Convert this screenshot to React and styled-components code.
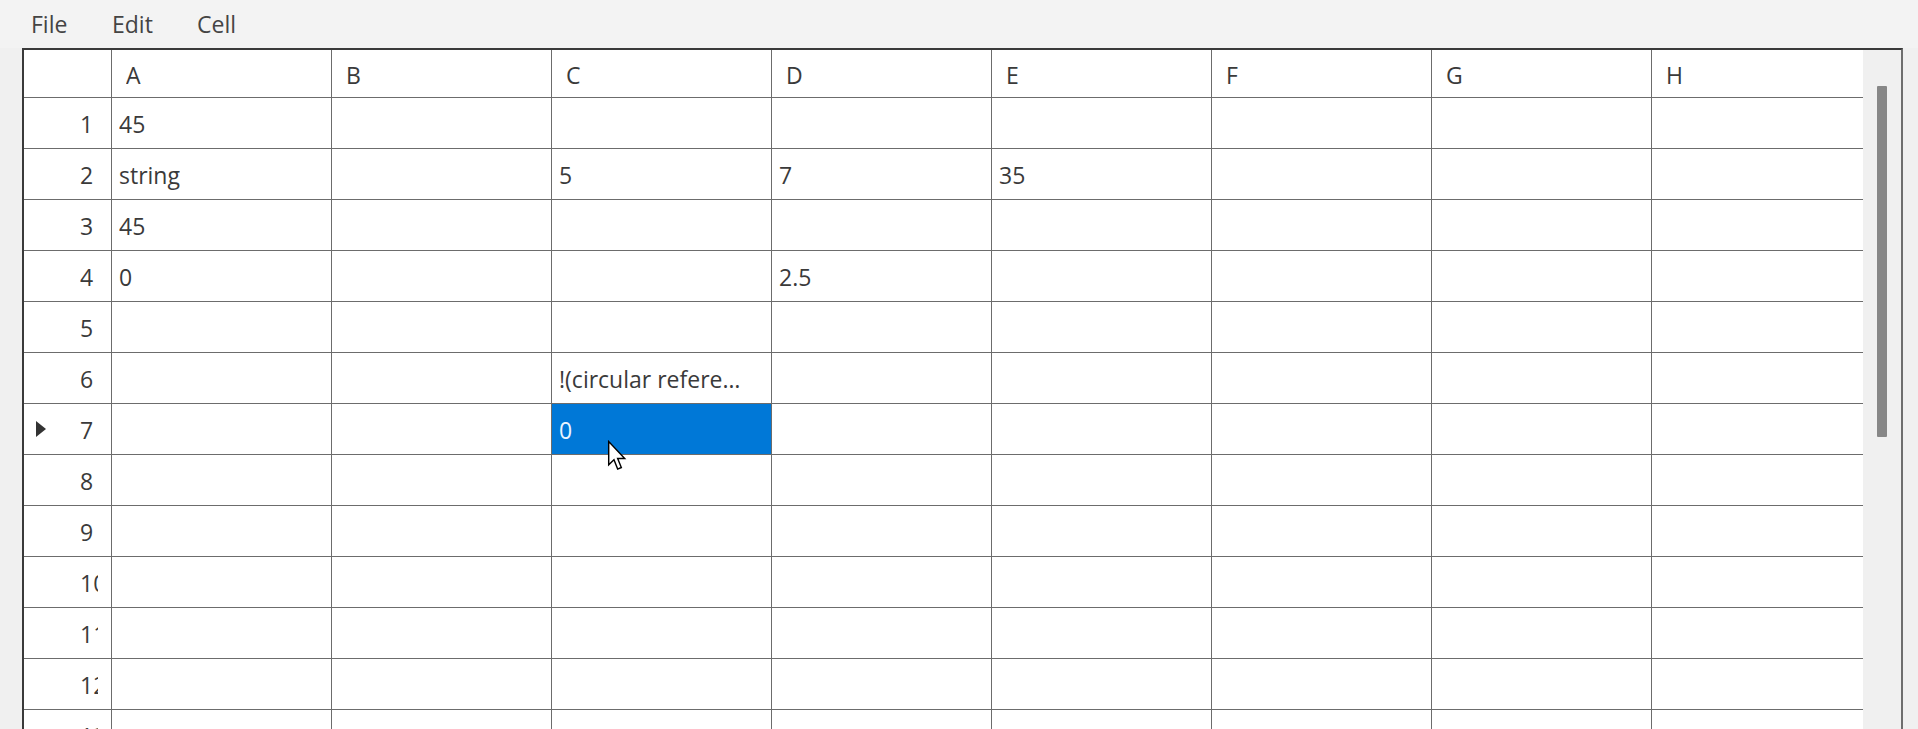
import React from "react";
import styled, { createGlobalStyle } from "styled-components";

const GlobalStyle = createGlobalStyle`
  html, body {
    margin: 0;
    padding: 0;
    overflow: hidden;
    background: #f0f0f0;
  }
  * {
    box-sizing: border-box;
  }
`;

const Window = styled.div`
  width: 1918px;
  height: 729px;
  display: flex;
  flex-direction: column;
  background: #f0f0f0;
  font-family: "Open Sans", "Noto Sans", sans-serif;
  color: #3a3a3a;
  overflow: hidden;
`;

const MenuBar = styled.div`
  height: 48px;
  flex-shrink: 0;
  display: flex;
  align-items: center;
  padding-left: 31px;
  background: #f3f3f3;
`;

const MenuItem = styled.div`
  width: ${(p) => p.$width}px;
  font-size: 23px;
  line-height: 30px;
  color: #444;
  margin-top: 0;
`;

const Frame = styled.div`
  flex: 1;
  min-height: 0;
  margin-left: 22px;
  width: 1881px;
  display: flex;
  border-top: 2px solid #3a3a3a;
  border-left: 2px solid #3a3a3a;
  border-right: 2px solid #6e6e6e;
  background: #fff;
`;

const GridArea = styled.div`
  flex: 1;
  min-width: 0;
  overflow: hidden;
`;

const Grid = styled.div`
  display: grid;
  grid-template-columns: 88px repeat(8, 220px);
  grid-auto-rows: 51px;
  grid-template-rows: 48px;
  width: max-content;
`;

const Cell = styled.div`
  position: relative;
  border-right: 1px solid #6c6c6c;
  border-bottom: 1px solid #6c6c6c;
  display: flex;
  align-items: center;
  padding-left: ${(p) => (p.$head ? 14 : 7)}px;
  padding-right: 26px;
  font-size: 23px;
  white-space: nowrap;
  overflow: ${(p) => (p.$selected ? "visible" : "hidden")};
  background: ${(p) => (p.$selected ? "#0078d7" : "#fff")};
  color: ${(p) => (p.$selected ? "#eaf4ff" : "#3a3a3a")};
`;

const CellText = styled.span`
  overflow: hidden;
  text-overflow: ellipsis;
  padding-top: 2px;
`;

const RowHead = styled.div`
  border-right: 1px solid #6c6c6c;
  border-bottom: 1px solid #6c6c6c;
  display: flex;
  align-items: center;
  padding-left: 12px;
  font-size: 23px;
  color: #3a3a3a;
`;

const MarkerSlot = styled.div`
  width: 44px;
  height: 16px;
  display: flex;
  align-items: center;
`;

const Marker = styled.div`
  width: 0;
  height: 0;
  border-top: 8px solid transparent;
  border-bottom: 8px solid transparent;
  border-left: 10px solid #333;
`;

const RowNum = styled.span`
  width: 18px;
  overflow: hidden;
  white-space: nowrap;
  padding-top: 2px;
`;

const Cursor = styled.svg`
  position: absolute;
  left: 55px;
  top: 36px;
  z-index: 5;
  pointer-events: none;
`;

const ScrollBar = styled.div`
  width: 38px;
  flex-shrink: 0;
  background: #f0f0f0;
  padding: 36px 0 0 14px;
`;

const Thumb = styled.div`
  width: 10px;
  height: 351px;
  background: #878787;
  border-radius: 1px;
`;

const columns = ["A", "B", "C", "D", "E", "F", "G", "H"];

const data = {
  1: { A: "45" },
  2: { A: "string", C: "5", D: "7", E: "35" },
  3: { A: "45" },
  4: { A: "0", D: "2.5" },
  6: { C: "!(circular reference)" },
  7: { C: "0" },
};

const selected = { row: 7, col: "C" };

function ArrowCursor() {
  return (
    <Cursor width="21" height="32" viewBox="0 0 13 20">
      <path
        d="M1 1 L1 15.5 L4.3 12.4 L6.6 18.2 L8.9 17.2 L6.6 11.6 L11 11.6 Z"
        fill="#fff"
        stroke="#000"
        strokeWidth="0.9"
        strokeLinejoin="miter"
      />
    </Cursor>
  );
}

export default function App() {
  const rows = Array.from({ length: 14 }, (_, i) => i + 1);
  return (
    <>
      <GlobalStyle />
      <Window>
        <MenuBar>
          <MenuItem $width={81}>File</MenuItem>
          <MenuItem $width={85}>Edit</MenuItem>
          <MenuItem $width={60}>Cell</MenuItem>
        </MenuBar>
        <Frame>
          <GridArea>
            <Grid>
              <RowHead />
              {columns.map((c) => (
                <Cell key={c} $head>
                  <CellText>{c}</CellText>
                </Cell>
              ))}
              {rows.map((r) => (
                <React.Fragment key={r}>
                  <RowHead>
                    <MarkerSlot>{r === selected.row && <Marker />}</MarkerSlot>
                    <RowNum>{r}</RowNum>
                  </RowHead>
                  {columns.map((c) => {
                    const isSel = r === selected.row && c === selected.col;
                    const value = data[r] && data[r][c];
                    return (
                      <Cell key={c} $selected={isSel}>
                        {value && <CellText>{value}</CellText>}
                        {isSel && <ArrowCursor />}
                      </Cell>
                    );
                  })}
                </React.Fragment>
              ))}
            </Grid>
          </GridArea>
          <ScrollBar>
            <Thumb />
          </ScrollBar>
        </Frame>
      </Window>
    </>
  );
}
